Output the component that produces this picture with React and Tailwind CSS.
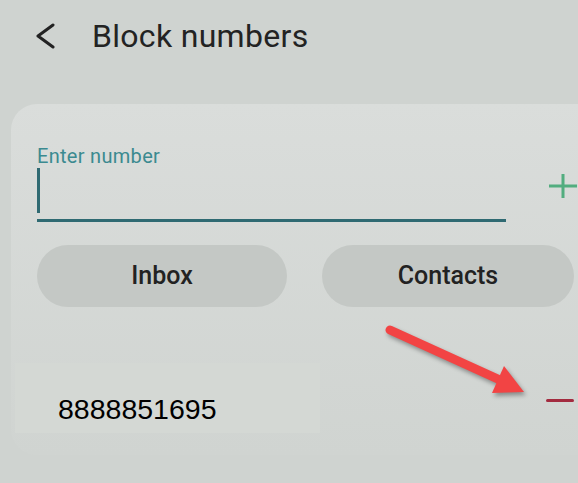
import React from 'react';

export default function App() {
    const blocked = ['8888851695'];

    return (
        <div className="relative w-[578px] h-[483px] overflow-hidden bg-[#cfd3d0] font-['Roboto',sans-serif]">
            <header className="flex items-center h-[72px] pl-[35px]">
                <svg width="22" height="26" viewBox="0 0 22 26" fill="none" className="shrink-0">
                    <path d="M18 2 L3 13 L18 24" stroke="#222" strokeWidth="3" strokeLinecap="round" strokeLinejoin="round" />
                </svg>
                <h1 className="ml-[35px] text-[32px] leading-[36px] text-[#232323] tracking-[0.3px]">Block numbers</h1>
            </header>

            <div className="mt-[32px] ml-[11px] w-[600px] h-[351px] rounded-l-[26px] bg-gradient-to-b from-[#dadddb] to-[#d0d4d1]">
                <div className="flex pt-[41px] pl-[26px]">
                    <div className="w-[469px]">
                        <label className="block text-[20px] leading-[23px] tracking-[0.3px] text-[#3b8a90]">Enter number</label>
                        <div className="h-[45px] w-[3px] bg-[#2f6a72]"></div>
                        <div className="mt-[6px] h-[3px] w-full bg-[#2f6a72]"></div>
                    </div>
                    <svg width="28" height="24" viewBox="0 0 28 24" className="ml-[43px] mt-[29px] shrink-0">
                        <path d="M14 0 V24 M0 12 H28" stroke="#52ad7f" strokeWidth="3" />
                    </svg>
                </div>

                <div className="flex gap-[35px] mt-[23px] pl-[26px]">
                    <button className="w-[250px] h-[62px] rounded-full bg-[#c4c8c5] text-[25px] font-medium text-[#222]">Inbox</button>
                    <button className="w-[252px] h-[62px] rounded-full bg-[#c4c8c5] text-[25px] font-medium text-[#222]">Contacts</button>
                </div>

                {blocked.map((num) => (
                    <div key={num} className="flex items-start mt-[56px] ml-[4px]">
                        <div className="w-[305px] h-[70px] bg-[#d4d8d4] pl-[43px] pt-[30px]">
                            <span className="font-['Liberation_Sans',Arial,sans-serif] text-[28.5px] leading-[32px] text-black">{num}</span>
                        </div>
                        <div className="ml-[226px] mt-[36px] w-[28px] h-[3px] rounded-full bg-[#a32b3f]"></div>
                    </div>
                ))}
            </div>

            <svg className="absolute left-0 top-0 pointer-events-none drop-shadow-[2px_3px_2px_rgba(0,0,0,0.35)]" width="578" height="483" viewBox="0 0 578 483">
                <path d="M390 330 L500 380" stroke="#f24444" strokeWidth="9" strokeLinecap="round" />
                <path d="M504 366 L492 393 L524 392 Z" fill="#f24444" />
            </svg>
        </div>
    );
}
